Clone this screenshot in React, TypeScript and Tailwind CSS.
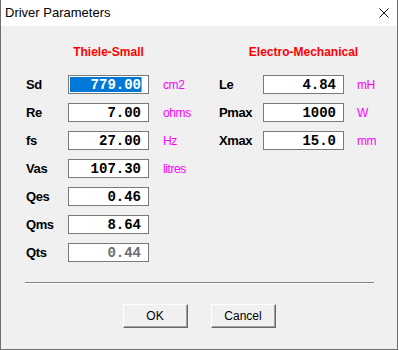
type Param = { label: string; value: string; unit?: string; selected?: boolean; disabled?: boolean };

const thieleSmall: Param[] = [
  { label: "Sd", value: "779.00", unit: "cm2", selected: true },
  { label: "Re", value: "7.00", unit: "ohms" },
  { label: "fs", value: "27.00", unit: "Hz" },
  { label: "Vas", value: "107.30", unit: "litres" },
  { label: "Qes", value: "0.46" },
  { label: "Qms", value: "8.64" },
  { label: "Qts", value: "0.44", disabled: true },
];

const electroMech: Param[] = [
  { label: "Le", value: "4.84", unit: "mH" },
  { label: "Pmax", value: "1000", unit: "W" },
  { label: "Xmax", value: "15.0", unit: "mm" },
];

function ValueBox(props: { p: Param }) {
  const { p } = props;
  if (p.selected) {
    return (
      <div className="flex h-[19px] w-[81px] items-stretch border border-[#7a7a7a] bg-white py-[1px] pl-[1px] pr-[6px]">
        <span className="flex flex-1 items-center justify-end bg-[#0078d7] text-white">{p.value}</span>
        <span className="w-[1px] bg-[#ff8c1a]" />
      </div>
    );
  }
  return (
    <div
      className={
        "flex h-[19px] w-[81px] items-center justify-end border border-[#7a7a7a] bg-white pr-[7px] " +
        (p.disabled ? "text-[#6d6d6d]" : "text-black")
      }
    >
      {p.value}
    </div>
  );
}

function Column(props: { title: string; items: Param[]; labelW: string; unitGap: string; className: string }) {
  return (
    <div className={props.className}>
      <div className="flex h-[14px]">
        <div className={props.labelW} />
        <div className="flex w-[81px] justify-center whitespace-nowrap text-[12px] font-bold leading-[14px] text-[#ff0000]">
          {props.title}
        </div>
      </div>
      <div className="mt-[16px] flex flex-col gap-[9px]">
        {props.items.map((p) => (
          <div key={p.label} className="flex h-[19px] items-center">
            <div className={props.labelW + " text-[13px] font-bold tracking-[-0.4px] text-black"}>{p.label}</div>
            <div className="font-['Liberation_Mono',monospace] text-[14px] font-bold leading-none">
              <ValueBox p={p} />
            </div>
            {p.unit && (
              <div className={props.unitGap + " text-[12px] tracking-[-0.4px] text-[#ff00ff]"}>{p.unit}</div>
            )}
          </div>
        ))}
      </div>
    </div>
  );
}

export default function App() {
  return (
    <div className="h-[350px] w-[398px] border-x border-b border-[#6e6e6e] bg-[#f0f0f0] font-['Liberation_Sans',Arial,sans-serif]">
      {/* title bar */}
      <div className="flex h-[26px] items-center justify-between bg-white pl-[4px] pr-[8px]">
        <span className="text-[13px] text-black">Driver Parameters</span>
        <svg viewBox="0 0 10 10" className="h-[10px] w-[10px]">
          <path d="M0.5 0.5L9.5 9.5M9.5 0.5L0.5 9.5" stroke="#111" strokeWidth="1" fill="none" />
        </svg>
      </div>

      <div className="flex pt-[19px]">
        <Column
          title="Thiele-Small"
          items={thieleSmall}
          labelW="w-[42px]"
          unitGap="ml-[14px]"
          className="ml-[25px] w-[193px]"
        />
        <Column title="Electro-Mechanical" items={electroMech} labelW="w-[44px]" unitGap="ml-[13px]" className="" />
      </div>

      <div className="ml-[24px] mr-[23px] mt-[20px] h-[2px] border-t border-b border-t-[#808080] border-b-white" />

      <div className="mt-[20px] flex justify-center gap-[23px]">
        {["OK", "Cancel"].map((b) => (
          <button
            key={b}
            className="flex h-[24px] w-[65px] items-center justify-center border border-b-[#696969] border-l-white border-r-[#696969] border-t-white bg-[#f0f0f0] text-[12px] text-black shadow-[inset_-1px_-1px_0_#a0a0a0]"
          >
            {b}
          </button>
        ))}
      </div>
    </div>
  );
}
